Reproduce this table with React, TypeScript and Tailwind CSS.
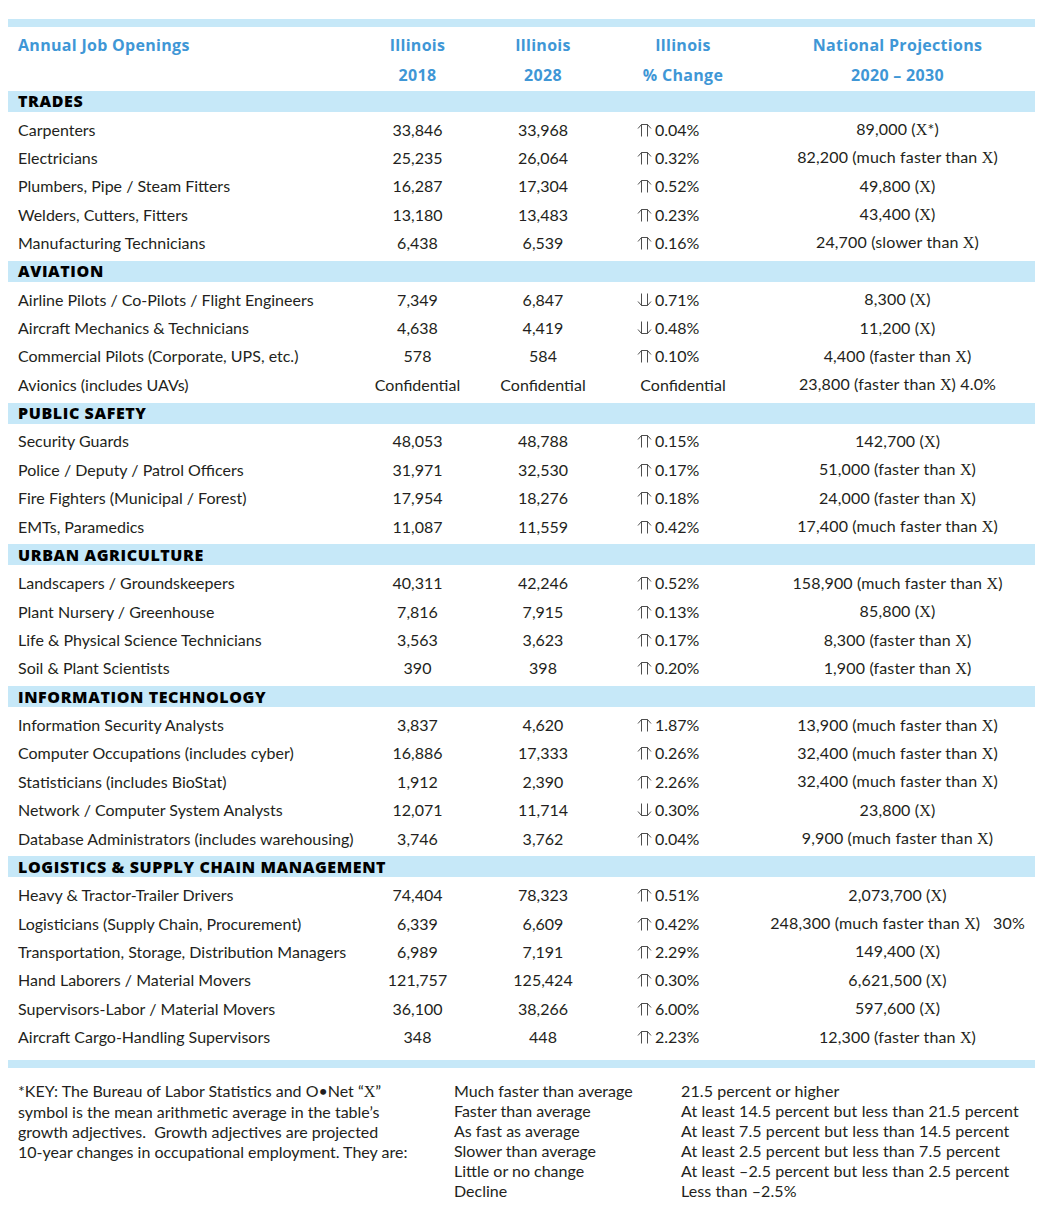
import React from 'react';

type Row = [string, string, string, 'up' | 'down' | null, string, string];

const sections: { title: string; rows: Row[] }[] = [
  {
    title: 'TRADES',
    rows: [
      ['Carpenters', '33,846', '33,968', 'up', '0.04%', '89,000 (X*)'],
      ['Electricians', '25,235', '26,064', 'up', '0.32%', '82,200 (much faster than X)'],
      ['Plumbers, Pipe / Steam Fitters', '16,287', '17,304', 'up', '0.52%', '49,800 (X)'],
      ['Welders, Cutters, Fitters', '13,180', '13,483', 'up', '0.23%', '43,400 (X)'],
      ['Manufacturing Technicians', '6,438', '6,539', 'up', '0.16%', '24,700 (slower than X)'],
    ],
  },
  {
    title: 'AVIATION',
    rows: [
      ['Airline Pilots / Co-Pilots / Flight Engineers', '7,349', '6,847', 'down', '0.71%', '8,300 (X)'],
      ['Aircraft Mechanics & Technicians', '4,638', '4,419', 'down', '0.48%', '11,200 (X)'],
      ['Commercial Pilots (Corporate, UPS, etc.)', '578', '584', 'up', '0.10%', '4,400 (faster than X)'],
      ['Avionics (includes UAVs)', 'Confidential', 'Confidential', null, 'Confidential', '23,800 (faster than X) 4.0%'],
    ],
  },
  {
    title: 'PUBLIC SAFETY',
    rows: [
      ['Security Guards', '48,053', '48,788', 'up', '0.15%', '142,700 (X)'],
      ['Police / Deputy / Patrol Officers', '31,971', '32,530', 'up', '0.17%', '51,000 (faster than X)'],
      ['Fire Fighters (Municipal / Forest)', '17,954', '18,276', 'up', '0.18%', '24,000 (faster than X)'],
      ['EMTs, Paramedics', '11,087', '11,559', 'up', '0.42%', '17,400 (much faster than X)'],
    ],
  },
  {
    title: 'URBAN AGRICULTURE',
    rows: [
      ['Landscapers / Groundskeepers', '40,311', '42,246', 'up', '0.52%', '158,900 (much faster than X)'],
      ['Plant Nursery / Greenhouse', '7,816', '7,915', 'up', '0.13%', '85,800 (X)'],
      ['Life & Physical Science Technicians', '3,563', '3,623', 'up', '0.17%', '8,300 (faster than X)'],
      ['Soil & Plant Scientists', '390', '398', 'up', '0.20%', '1,900 (faster than X)'],
    ],
  },
  {
    title: 'INFORMATION TECHNOLOGY',
    rows: [
      ['Information Security Analysts', '3,837', '4,620', 'up', '1.87%', '13,900 (much faster than X)'],
      ['Computer Occupations (includes cyber)', '16,886', '17,333', 'up', '0.26%', '32,400 (much faster than X)'],
      ['Statisticians (includes BioStat)', '1,912', '2,390', 'up', '2.26%', '32,400 (much faster than X)'],
      ['Network / Computer System Analysts', '12,071', '11,714', 'down', '0.30%', '23,800 (X)'],
      ['Database Administrators (includes warehousing)', '3,746', '3,762', 'up', '0.04%', '9,900 (much faster than X)'],
    ],
  },
  {
    title: 'LOGISTICS & SUPPLY CHAIN MANAGEMENT',
    rows: [
      ['Heavy & Tractor-Trailer Drivers', '74,404', '78,323', 'up', '0.51%', '2,073,700 (X)'],
      ['Logisticians (Supply Chain, Procurement)', '6,339', '6,609', 'up', '0.42%', '248,300 (much faster than X)\u00a0\u00a0\u00a030%'],
      ['Transportation, Storage, Distribution Managers', '6,989', '7,191', 'up', '2.29%', '149,400 (X)'],
      ['Hand Laborers / Material Movers', '121,757', '125,424', 'up', '0.30%', '6,621,500 (X)'],
      ['Supervisors-Labor / Material Movers', '36,100', '38,266', 'up', '6.00%', '597,600 (X)'],
      ['Aircraft Cargo-Handling Supervisors', '348', '448', 'up', '2.23%', '12,300 (faster than X)'],
    ],
  },
];

const growth: [string, string][] = [
  ['Much faster than average', '21.5 percent or higher'],
  ['Faster than average', 'At least 14.5 percent but less than 21.5 percent'],
  ['As fast as average', 'At least 7.5 percent but less than 14.5 percent'],
  ['Slower than average', 'At least 2.5 percent but less than 7.5 percent'],
  ['Little or no change', 'At least \u20132.5 percent but less than 2.5 percent'],
  ['Decline', 'Less than \u20132.5%'],
];

const grid = 'grid grid-cols-[347px_125px_126px_154px_1fr]';
const body = "font-['Lato',sans-serif]";
const head = "font-['Open_Sans',sans-serif] font-bold text-[16px] tracking-[0.3px] text-[#3f97d6]";

function Arrow({ dir }: { dir: 'up' | 'down' }) {
  return (
    <svg
      width="15"
      height="14"
      viewBox="0 0 15 14"
      className={`mr-[3px] ${dir === 'down' ? 'rotate-180' : ''}`}
      fill="none"
      stroke="#3a3a3a"
      strokeWidth="0.9"
    >
      <path d="M1 5.5 L4.5 1.5 L10.5 1.5 L14 5.5" />
      <path d="M4.5 1.5 V13.5 M10.5 1.5 V13.5" />
    </svg>
  );
}

// national figures use a serif "X"
function Nat({ text }: { text: string }) {
  const parts = text.split('X');
  return (
    <>
      {parts.map((p, i) => (
        <React.Fragment key={i}>
          {p}
          {i < parts.length - 1 && <span className="font-['Liberation_Serif',serif] text-[16px]">X</span>}
        </React.Fragment>
      ))}
    </>
  );
}

export default function App() {
  return (
    <div className={`w-[1062px] h-[1217px] bg-white text-[#231f20] pt-[19px] ${body}`}>
      <div className="ml-[8px] w-[1027px]">
        {/* top rule */}
        <div className="h-[8px] bg-[#c6e8f8]" />

        {/* column headings */}
        <div className={`${grid} ${head} mt-[3px] -mb-[3px]`}>
          <div className="h-[30px] flex items-center pl-[10px]">Annual Job Openings</div>
          <div className="h-[30px] flex items-center justify-center">Illinois</div>
          <div className="h-[30px] flex items-center justify-center">Illinois</div>
          <div className="h-[30px] flex items-center justify-center">Illinois</div>
          <div className="h-[30px] flex items-center justify-center">National Projections</div>
          <div className="h-[30px]" />
          <div className="h-[30px] flex items-center justify-center">2018</div>
          <div className="h-[30px] flex items-center justify-center">2028</div>
          <div className="h-[30px] flex items-center justify-center">% Change</div>
          <div className="h-[30px] flex items-center justify-center">2020 – 2030</div>
        </div>

        {sections.map((s) => (
          <div key={s.title}>
            <div className="h-[28.36px] flex items-center">
              <div className="h-[21px] w-full bg-[#c6e8f8] flex items-center pl-[10px] font-['Open_Sans',sans-serif] font-extrabold text-[16px] tracking-[0.6px] text-black">
                {s.title}
              </div>
            </div>
            {s.rows.map((r) => (
              <div key={r[0]} className={`${grid} h-[28.36px] items-center text-[16px]`}>
                <div className="pl-[10px] whitespace-nowrap">{r[0]}</div>
                <div className="text-center">{r[1]}</div>
                <div className="text-center">{r[2]}</div>
                {r[3] ? (
                  <div className="pl-[31px] flex items-center">
                    <Arrow dir={r[3]} />
                    <span>{r[4]}</span>
                  </div>
                ) : (
                  <div className="text-center">{r[4]}</div>
                )}
                <div className="text-center whitespace-nowrap tracking-[0.15px]">
                  <Nat text={r[5]} />
                </div>
              </div>
            ))}
          </div>
        ))}

        {/* bottom rule */}
        <div className="h-[8px] bg-[#c6e8f8] mt-[9px]" />

        {/* key */}
        <div className="flex mt-[13px] text-[16px] leading-[20px]">
          <div className="w-[446px] pl-[10px]">
            *KEY: The Bureau of Labor Statistics and O•Net “<span className="font-['Liberation_Serif',serif]">X</span>”
            <br />
            symbol is the mean arithmetic average in the table’s
            <br />
            growth adjectives.&nbsp; Growth adjectives are projected
            <br />
            10-year changes in occupational employment. They are:
          </div>
          <div className="w-[227px]">
            {growth.map((g) => (
              <div key={g[0]}>{g[0]}</div>
            ))}
          </div>
          <div className="tracking-[0.1px]">
            {growth.map((g) => (
              <div key={g[1]}>{g[1]}</div>
            ))}
          </div>
        </div>
      </div>
    </div>
  );
}
